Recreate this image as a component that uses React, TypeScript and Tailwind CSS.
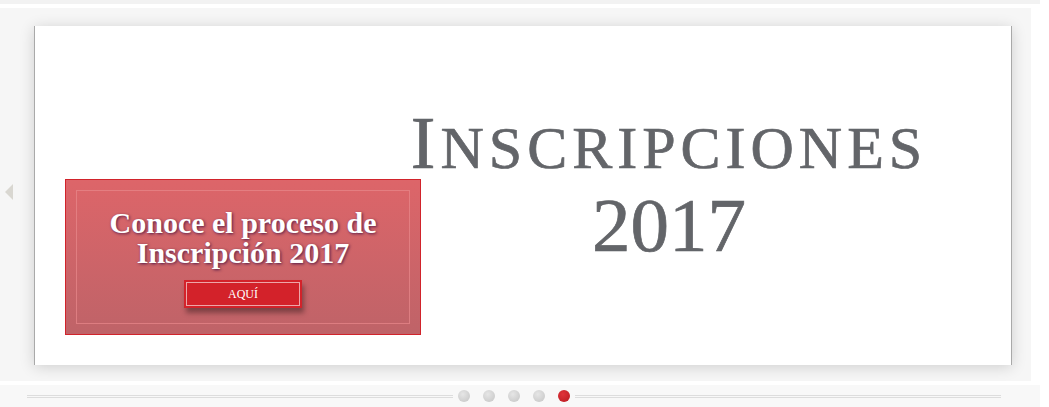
export default function App() {
  const dots = [false, false, false, false, true];

  return (
    <div className="w-[1049px] h-[407px] bg-white overflow-hidden font-['Liberation_Serif',serif]">
      {/* top strip */}
      <div className="h-[4px] w-[1040px] bg-[#f2f2f2]" />
      <div className="h-[4px]" />

      {/* slider frame */}
      <div className="relative w-[1031px] h-[373px] bg-[#f6f6f6] pt-[18px] pl-[34px]">
        {/* prev arrow */}
        <div className="absolute left-[5px] top-[176px] w-0 h-0 border-y-[8px] border-y-transparent border-r-[8px] border-r-[#d9d7d1]" />

        {/* slide */}
        <div className="relative w-[978px] h-[339px] bg-white border-x border-[#a9a9a9] shadow-[0_2px_14px_rgba(0,0,0,0.16)]">
          <div className="w-[560px] ml-[354px] pt-[81px] text-center text-[#636569] [-webkit-text-stroke:0.7px_#636569]">
            <div className="text-[74px] leading-[72px] tracking-[5px] whitespace-nowrap">
              I<span className="text-[60px]">NSCRIPCIONES</span>
            </div>
            <div className="mt-[2px] text-[77px] leading-[78px]">2017</div>
          </div>

          {/* caption box */}
          <div className="absolute left-[30px] top-[153px] w-[356px] h-[156px] border border-[#d1232b] bg-gradient-to-b from-[#dd6569] to-[#bf6368] p-[10px]">
            <div className="h-full border border-[#e8898b]/70 flex flex-col items-center pt-[17px]">
              <div className="text-white font-bold text-[30px] leading-[30px] text-center [text-shadow:1px_1px_3px_rgba(40,0,60,0.75)]">
                Conoce el proceso de
                <br />
                Inscripción 2017
              </div>
              <div className="mt-[12px] w-[118px] h-[28px] bg-[#d3222a] p-[2px] shadow-[2px_5px_5px_rgba(0,0,0,0.35)]">
                <div className="h-full border border-white/60 flex items-center justify-center text-white text-[12px]">
                  AQUÍ
                </div>
              </div>
            </div>
          </div>
        </div>
      </div>

      <div className="h-[4px]" />

      {/* pager bar */}
      <div className="w-[1040px] h-[22px] bg-[#f8f8f8] flex items-center">
        <div className="ml-[27px] w-[426px] h-[3px] border-y border-[#dddddd]" />
        <div className="flex gap-[13px] mx-[5px]">
          {dots.map((active, i) => (
            <div
              key={i}
              className={
                active
                  ? "w-[12px] h-[12px] rounded-full bg-[radial-gradient(circle_at_40%_35%,#e0333a,#b81a20)]"
                  : "w-[12px] h-[12px] rounded-full bg-[radial-gradient(circle_at_40%_35%,#e6e6e6,#c4c4c4)]"
              }
            />
          ))}
        </div>
        <div className="w-[426px] h-[3px] border-y border-[#dddddd]" />
      </div>
    </div>
  );
}
